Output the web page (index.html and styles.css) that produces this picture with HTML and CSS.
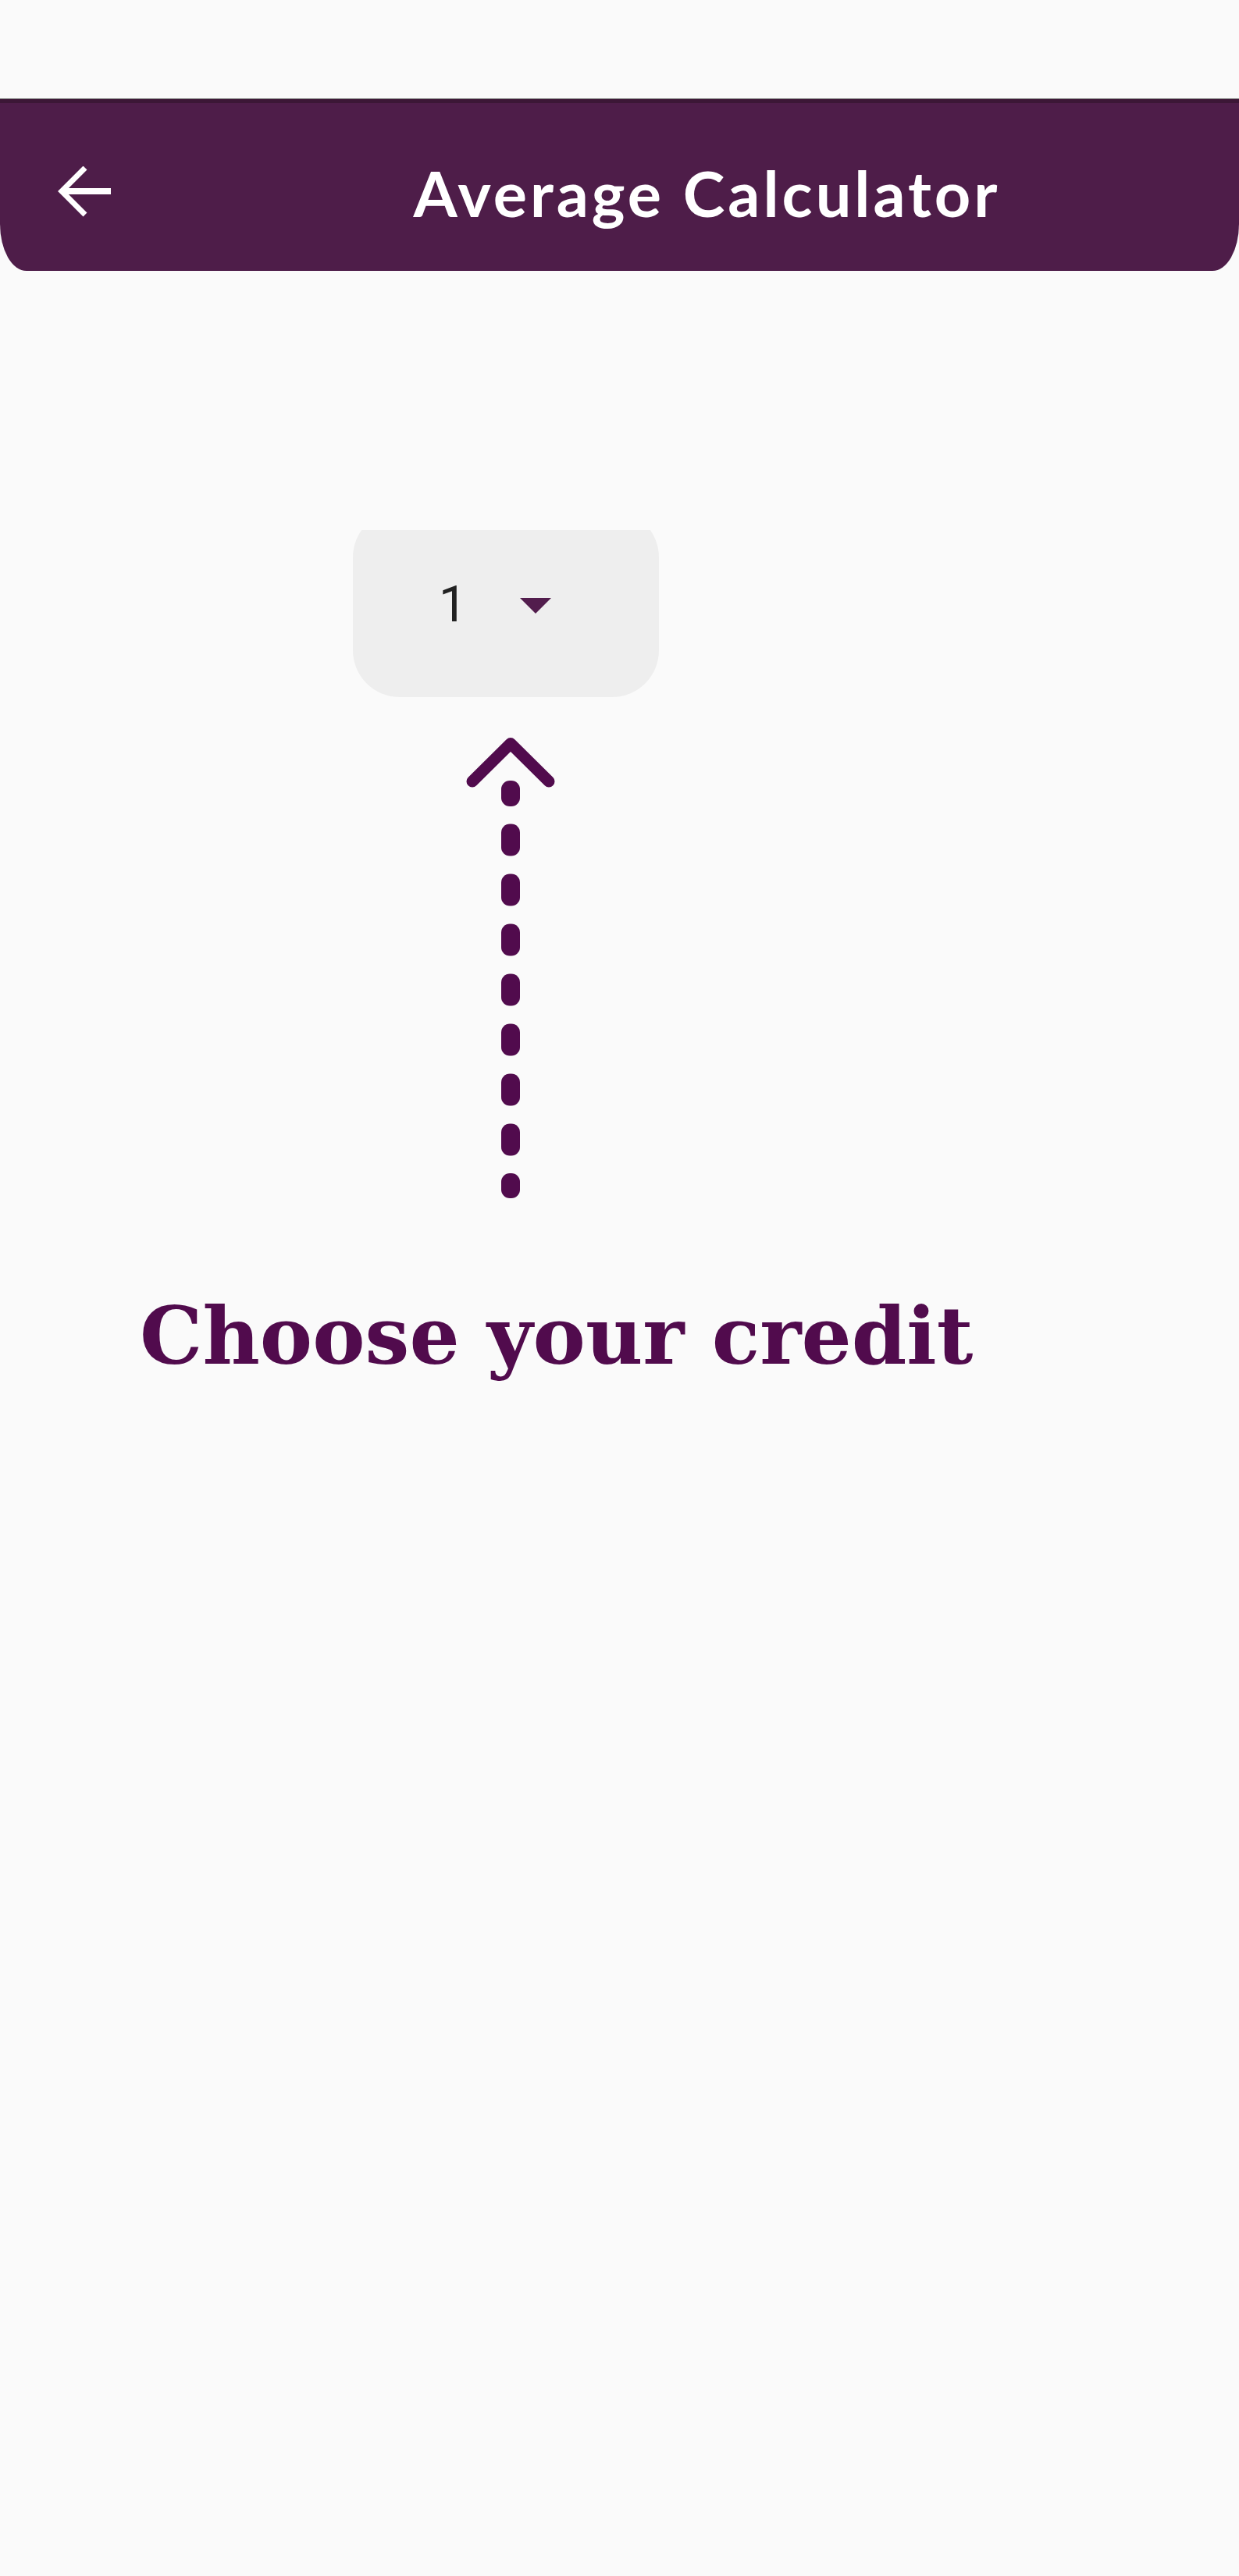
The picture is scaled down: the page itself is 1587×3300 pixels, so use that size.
FILE: index.html
```html
<!DOCTYPE html>
<html lang="en">
<head>
<meta charset="utf-8">
<title>Average Calculator</title>
<link rel="stylesheet" href="styles.css">
</head>
<body>
<div class="status"></div>
<header class="appbar">
  <div class="leading">
    <svg class="back" width="70" height="66" viewBox="0 0 70 66" aria-hidden="true">
      <path d="M35 2 L5 32 L35 62" fill="none" stroke="#ffffff" stroke-width="7"/>
      <path d="M5 32 H68" fill="none" stroke="#ffffff" stroke-width="8"/>
    </svg>
  </div>
  <div class="title-wrap"><h1 class="title">Average Calculator</h1></div>
</header>
<main class="content">
  <div class="dropdown-clip">
    <div class="dropdown">
      <span class="value">1</span>
      <svg class="caret" width="96" height="96" viewBox="0 0 24 24" aria-hidden="true">
        <path d="M7 10l5 5 5-5z" fill="#521d4d"/>
      </svg>
    </div>
  </div>
  <svg class="pointer" width="130" height="605" viewBox="0 0 130 605" aria-hidden="true">
    <polyline points="16,66 65,17.5 114,66" fill="none" stroke="#510b4d" stroke-width="15" stroke-linecap="round" stroke-linejoin="round"/>
    <rect x="53" y="65" width="24" height="33" rx="11" fill="#510b4d"/>
    <rect x="53" y="120.5" width="24" height="41" rx="11" fill="#510b4d"/>
    <rect x="53" y="184.5" width="24" height="41" rx="11" fill="#510b4d"/>
    <rect x="53" y="248.5" width="24" height="41" rx="11" fill="#510b4d"/>
    <rect x="53" y="312.5" width="24" height="41" rx="11" fill="#510b4d"/>
    <rect x="53" y="376.5" width="24" height="41" rx="11" fill="#510b4d"/>
    <rect x="53" y="440.5" width="24" height="41" rx="11" fill="#510b4d"/>
    <rect x="53" y="504.5" width="24" height="41" rx="11" fill="#510b4d"/>
    <rect x="53" y="568" width="24" height="32" rx="11" fill="#510b4d"/>
  </svg>
  <p class="hint">Choose your credit</p>
</main>
</body>
</html>
```
FILE: styles.css
```css
html, body {
  margin: 0;
  padding: 0;
  background: #fafafa;
}
body {
  min-height: 3300px;
  font-family: "Roboto", "Noto Sans", sans-serif;
}
.status {
  height: 126px;
  border-bottom: 1px solid #7a7a7a;
}
.appbar {
  box-sizing: border-box;
  height: 220px;
  background: #4e1d49;
  border-top: 5px solid #3c1736;
  padding-top: 13px;
  display: flex;
  align-items: center;
  border-bottom-left-radius: 34px 60px;
  border-bottom-right-radius: 34px 60px;
}
.leading {
  width: 224px;
  flex: 0 0 224px;
  display: flex;
  justify-content: center;
  align-items: center;
}
.back {
  display: block;
  margin-left: -6px;
}
.title-wrap {
  flex: 1;
  display: flex;
  justify-content: center;
}
.title {
  margin: 0;
  font-family: "Lato", "Open Sans", sans-serif;
  font-weight: 700;
  font-size: 81px;
  line-height: 1;
  letter-spacing: 4px;
  color: #ffffff;
}
.content {
  display: flex;
  flex-direction: column;
  align-items: flex-start;
}
.dropdown-clip {
  margin-top: 332px;
  margin-left: 452px;
  width: 392px;
  height: 214px;
  overflow: hidden;
}
.dropdown {
  margin-top: -25px;
  height: 239px;
  border-radius: 60px;
  background: #eeeeee;
  display: flex;
  justify-content: center;
  align-items: center;
  gap: 40px;
}
.value {
  font-family: "Roboto", sans-serif;
  font-size: 64px;
  line-height: 1;
  color: #212121;
  padding-top: 2px;
}
.caret {
  display: block;
}
.pointer {
  display: block;
  margin-top: 42px;
  margin-left: 589px;
}
.hint {
  margin: 121px 0 0 179px;
  font-family: "DejaVu Serif", serif;
  font-weight: 700;
  font-size: 101px;
  line-height: 1;
  color: #510b4d;
}
```
